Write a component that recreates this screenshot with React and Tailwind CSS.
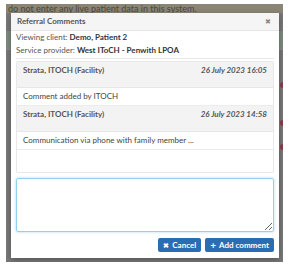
import React from 'react';

const CommentItem = ({ author, date, text }) => (
    <div>
        <div className="h-[26px] bg-[#f3f3f3] border-b border-[#e6e6e6] px-[6px] pt-[3px] flex justify-between">
            <span className="font-bold text-[#555]">{author}</span>
            <span className="font-bold italic text-[#555]">{date}</span>
        </div>
        <div className="h-[18px] bg-white border-b border-[#ececec] px-[6px] flex items-center text-[#444]">
            {text}
        </div>
    </div>
);

const App = () => {
    return (
        <div className="w-[289px] h-[271px] bg-white pt-[4px] pl-[6px] text-[8px] leading-[11px]" style={{ fontFamily: 'Lato, "Open Sans", sans-serif' }}>
            <div className="relative w-[277px] h-[258px] bg-[#787878] overflow-hidden">
                {/* dimmed page behind the dialog */}
                <div className="h-[9px] bg-[#8a8574] pl-[2px] text-[#4d4a40] text-[9px] leading-[9px]">
                    do not enter any live patient data in this system.
                </div>
                <div className="h-[18px]" />
                <div className="h-[19px] bg-[#7e8a7e] border-b border-[#8a8a8a]" />
                <div className="absolute left-[274px] top-[78px] w-[6px] h-[6px] rounded-full bg-[#8e3a4c]" />
                <div className="absolute left-[274px] top-[116px] w-[6px] h-[6px] rounded-full bg-[#8e3a4c]" />
                <div className="absolute left-[274px] top-[140px] w-[6px] h-[6px] rounded-full bg-[#8e3a4c]" />

                {/* dialog */}
                <div className="absolute left-[5px] top-[9px] w-[268px] h-[245px] bg-white flex flex-col shadow-[0_2px_6px_rgba(0,0,0,0.3)]">
                    <div className="h-[18px] bg-[#f5f5f5] border-b border-[#e5e5e5] px-[6px] flex items-center justify-between">
                        <span className="font-bold text-[#555]">Referral Comments</span>
                        <span className="text-[#888] text-[7px] pr-[2px]">✖</span>
                    </div>
                    <div className="px-[5px] flex flex-col flex-1">
                        <div className="text-[#555] leading-[13px] pb-[1px] border-b border-[#e8e8e8]">
                            <div>Viewing client: <span className="font-bold text-[#333]">Demo, Patient 2</span></div>
                            <div>Service provider: <span className="font-bold text-[#333]">West IToCH - Penwith LPOA</span></div>
                        </div>
                        <div className="mt-[2px] h-[112px] border border-[#e8e8e8] rounded-[2px] overflow-hidden">
                            <CommentItem author="Strata, ITOCH (Facility)" date="26 July 2023 16:05" text="Comment added by ITOCH" />
                            <CommentItem author="Strata, ITOCH (Facility)" date="26 July 2023 14:58" text="Communication via phone with family member ..." />
                        </div>
                        <textarea className="mt-[5px] h-[54px] border border-[#8fd3ee] rounded-[2px] outline-none resize-y shadow-[0_0_3px_rgba(102,175,233,0.5)]" />
                        <div className="mt-[6px] flex justify-end gap-[4px]">
                            <button className="h-[14px] px-[5px] bg-[#2a6db3] text-white font-bold rounded-[2px] flex items-center gap-[3px]">
                                <span className="text-[7px]">✖</span>Cancel
                            </button>
                            <button className="h-[14px] px-[5px] bg-[#2a6db3] text-white font-bold rounded-[2px] flex items-center gap-[3px]">
                                <span className="text-[10px]">+</span>Add comment
                            </button>
                        </div>
                    </div>
                </div>
            </div>
        </div>
    );
};

export default App;
